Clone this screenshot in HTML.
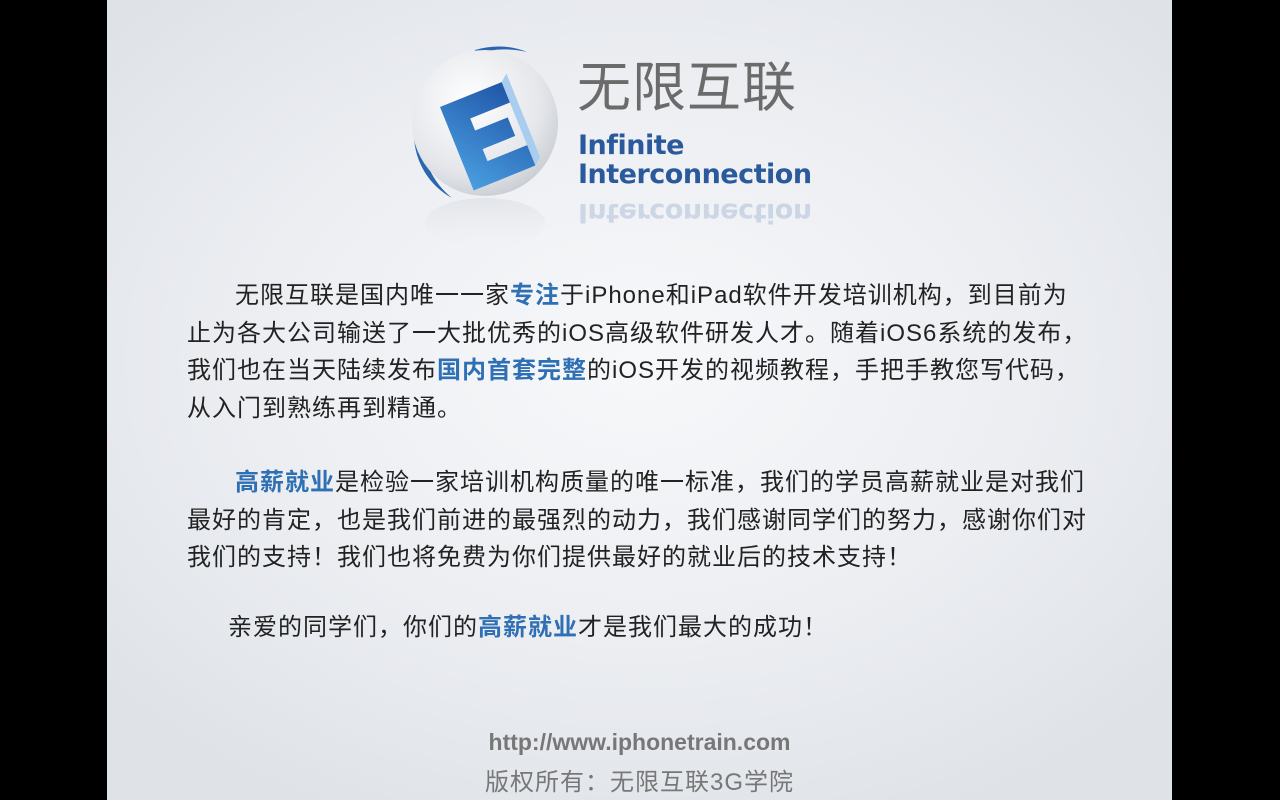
<!DOCTYPE html>
<html><head><meta charset="utf-8"><style>
html,body{margin:0;padding:0;width:1280px;height:800px;background:#000;overflow:hidden}
#s{position:absolute;left:107px;top:0;width:1065px;height:800px;
background:radial-gradient(ellipse 700px 500px at 50% 45%,#f7f8fa 0%,#eceef2 55%,#dfe3e8 100%);}
.t{position:absolute;white-space:nowrap;font-family:"Liberation Sans","Noto Sans CJK SC",sans-serif;font-size:24px;letter-spacing:1.0px;color:#222;line-height:24px}
.b{color:#2f6fb3;font-weight:bold}
.f{position:absolute;white-space:nowrap;font-family:"Liberation Sans","Noto Sans CJK SC",sans-serif;color:#777;width:1065px;text-align:center;left:0}
</style></head><body>
<div id="s">
 <svg style="position:absolute;left:290px;top:38px" width="170" height="220" viewBox="0 0 170 220">
  <defs>
   <radialGradient id="g" cx="40%" cy="35%" r="70%"><stop offset="0" stop-color="#ffffff"/><stop offset="0.7" stop-color="#e4e6ea"/><stop offset="1" stop-color="#c8ccd2"/></radialGradient>
   <linearGradient id="e" x1="0" y1="1" x2="1" y2="0"><stop offset="0" stop-color="#4a9ee0"/><stop offset="1" stop-color="#2056a8"/></linearGradient>
   <linearGradient id="r" x1="0" y1="0" x2="0" y2="1"><stop offset="0" stop-color="#dfe2e6" stop-opacity=".8"/><stop offset="1" stop-color="#eceef2" stop-opacity="0"/></linearGradient>
  </defs>
  <path d="M17 98 A73 73 0 0 0 55 160 A80 80 0 0 1 25 98Z" fill="#2a66b0"/>
  <path d="M78 12 Q105 4 130 14 Q105 8 78 16Z" fill="#2a66b0"/>
  <circle cx="88" cy="85" r="73" fill="url(#g)"/>
  <g transform="translate(43,69) rotate(-22) scale(0.95,1)">
   <path d="M70 0 l8 -6 V84 l-8 6Z" fill="#a9cdee"/>
   <path d="M0 0 H70 V22 H25 V35 H62 V55 H25 V68 H70 V90 H0 Z" fill="url(#e)"/>
  </g>
  <ellipse cx="88" cy="185" rx="60" ry="25" fill="url(#r)"/>
 </svg>
 <div style="position:absolute;left:470px;top:58px;font-family:'Liberation Sans','Noto Sans CJK SC',sans-serif;font-size:54px;color:#6b6b6b;line-height:60px;letter-spacing:1px">无限互联</div>
 <div style="position:absolute;left:471px;top:131px;font-family:'DejaVu Sans',sans-serif;font-weight:bold;font-size:27px;color:#2b5a9c;line-height:29px;letter-spacing:-0.5px">Infinite<br>Interconnection</div>
 <div style="position:absolute;left:471px;top:198px;font-family:'DejaVu Sans',sans-serif;font-weight:bold;font-size:27px;color:#2b5a9c;line-height:29px;letter-spacing:-0.5px;transform:scaleY(-1);opacity:.18">Interconnection</div>

 <div class="t" style="left:128px;top:284px">无限互联是国内唯一一家<span class="b">专注</span>于iPhone和iPad软件开发培训机构，到目前为</div>
 <div class="t" style="left:80px;top:322px">止为各大公司输送了一大批优秀的iOS高级软件研发人才。随着iOS6系统的发布，</div>
 <div class="t" style="left:80px;top:359px">我们也在当天陆续发布<span class="b">国内首套完整</span>的iOS开发的视频教程，手把手教您写代码，</div>
 <div class="t" style="left:80px;top:397px">从入门到熟练再到精通。</div>

 <div class="t" style="left:128px;top:471px"><span class="b">高薪就业</span>是检验一家培训机构质量的唯一标准，我们的学员高薪就业是对我们</div>
 <div class="t" style="left:80px;top:509px">最好的肯定，也是我们前进的最强烈的动力，我们感谢同学们的努力，感谢你们对</div>
 <div class="t" style="left:80px;top:546px">我们的支持！我们也将免费为你们提供最好的就业后的技术支持！</div>

 <div class="t" style="left:121px;top:616px">亲爱的同学们，你们的<span class="b">高薪就业</span>才是我们最大的成功！</div>

 <div class="f" style="top:729px;font-size:23px;font-weight:bold;letter-spacing:0px">http://www.iphonetrain.com</div>
 <div class="f" style="top:762px;font-size:24px;letter-spacing:1px">版权所有：无限互联3G学院</div>
</div>
</body></html>
